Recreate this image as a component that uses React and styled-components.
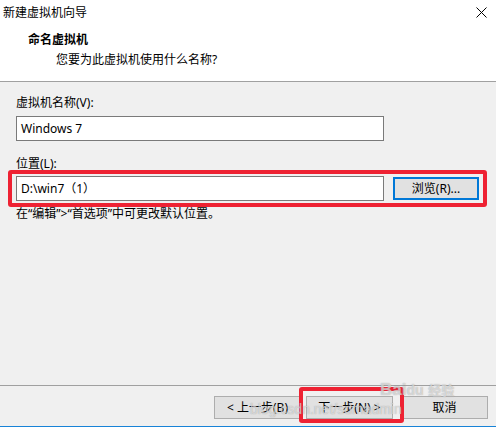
import React from 'react';
import styled, { createGlobalStyle } from 'styled-components';

const Global = createGlobalStyle`
  html, body {
    margin: 0;
    padding: 0;
    background: #f0f0f0;
  }
  * {
    box-sizing: border-box;
  }
`;

const FONT = `"Segoe UI", "Noto Sans", "Noto Sans CJK SC", sans-serif`;

const Window = styled.div`
  position: relative;
  width: 496px;
  height: 427px;
  display: flex;
  flex-direction: column;
  background: #f0f0f0;
  border-bottom: 1px solid #1883d7;
  font-family: ${FONT};
  font-size: 12px;
  color: #000;
  overflow: hidden;
`;

const Top = styled.div`
  background: #fff;
  height: 82px;
  border-bottom: 1px solid #a0a0a0;
  display: flex;
  flex-direction: column;
`;

const TitleBar = styled.div`
  height: 28px;
  display: flex;
  align-items: center;
  justify-content: space-between;
  padding: 0 8px 3px 3px;
  line-height: 16px;
`;

const Close = styled.div`
  width: 14px;
  height: 14px;
  display: flex;
  align-items: center;
  justify-content: center;
`;

const Heading = styled.div`
  padding-left: 28px;
  font-weight: bold;
  line-height: 16px;
  margin-top: 4px;
`;

const SubHeading = styled.div`
  padding-left: 56px;
  line-height: 16px;
  margin-top: 4px;
`;

const Body = styled.div`
  flex: 1;
  padding: 13px 16px 0 16px;
  display: flex;
  flex-direction: column;
`;

const Label = styled.div`
  line-height: 16px;
  margin-top: ${p => p.gap || 0}px;
`;

const Row = styled.div`
  position: relative;
  display: flex;
  align-items: center;
  gap: 9px;
  margin-top: 4px;
`;

const Input = styled.div`
  width: 368px;
  height: 25px;
  background: #fff;
  border: 1px solid #7a7a7a;
  padding: 0 4px;
  display: flex;
  align-items: center;
  line-height: 16px;
  margin-top: ${p => p.gap || 0}px;
`;

const Button = styled.div`
  width: ${p => p.w || 87}px;
  height: 23px;
  background: #e1e1e1;
  border: ${p => (p.focus ? '2px solid #0078d7' : '1px solid #adadad')};
  display: flex;
  align-items: center;
  justify-content: center;
  line-height: 16px;
`;

const Hint = styled.div`
  line-height: 16px;
  margin-top: 5px;
`;

const Footer = styled.div`
  height: 41px;
  border-top: 1px solid #a0a0a0;
  display: flex;
  justify-content: flex-end;
  align-items: flex-start;
  padding: 10px 8px 0 0;
  gap: 0;
`;

const ButtonGroup = styled.div`
  display: flex;
  gap: 5px;
  margin-right: ${p => p.mr || 0}px;
`;

const Mark = styled.div`
  position: absolute;
  border: 4px solid #ee2233;
  border-radius: 3px;
  pointer-events: none;
`;

const Watermark = styled.div`
  position: absolute;
  font-family: "Liberation Sans", "Noto Sans CJK SC", sans-serif;
  color: rgba(255, 255, 255, 0.55);
  text-shadow: 0 0 1px rgba(120, 120, 120, 0.7);
  pointer-events: none;
  white-space: nowrap;
`;

export default function App() {
  return (
    <Window>
      <Global />
      <Top>
        <TitleBar>
          <span>新建虚拟机向导</span>
          <Close>
            <svg width="11" height="11" viewBox="0 0 11 11">
              <path d="M0.5 0.5 L10.5 10.5 M10.5 0.5 L0.5 10.5" stroke="#000" strokeWidth="1" />
            </svg>
          </Close>
        </TitleBar>
        <Heading>命名虚拟机</Heading>
        <SubHeading>您要为此虚拟机使用什么名称?</SubHeading>
      </Top>
      <Body>
        <Label>虚拟机名称(V):</Label>
        <Input gap={5}>Windows 7</Input>
        <Label gap={15}>位置(L):</Label>
        <Row>
          <Input>D:\win7（1）</Input>
          <Button w={86} focus>浏览(R)...</Button>
        </Row>
        <Hint>在“编辑”&gt;“首选项”中可更改默认位置。</Hint>
      </Body>
      <Footer>
        <ButtonGroup mr={8}>
          <Button>&lt; 上一步(B)</Button>
          <Button>下一步(N) &gt;</Button>
        </ButtonGroup>
        <Button>取消</Button>
      </Footer>
      <Mark style={{ left: 8, top: 170, width: 479, height: 37 }} />
      <Mark style={{ left: 299, top: 387, width: 105, height: 36 }} />
      <Watermark style={{ left: 380, top: 380, fontSize: 17, fontWeight: 'bold' }}>
        Bai<span style={{ fontSize: 14 }}>du</span> <span style={{ fontSize: 13 }}>经验</span>
      </Watermark>
      <Watermark style={{ left: 250, top: 401, fontSize: 14 }}>
        blog.csdn.net/sdmadmin
      </Watermark>
    </Window>
  );
}
